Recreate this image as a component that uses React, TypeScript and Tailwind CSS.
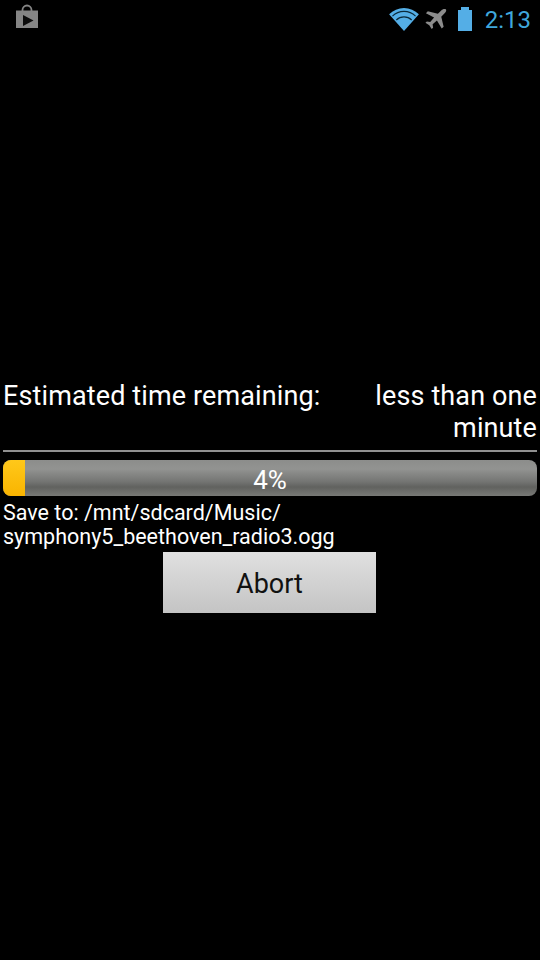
export default function App() {
  return (
    <div className="h-[960px] w-[540px] overflow-hidden bg-black font-['Roboto',sans-serif] text-white">
      <div className="flex h-[38px] items-center justify-between pl-[14px] pr-[9px]">
        <svg className="mt-[-4px]" width="26" height="26" viewBox="0 0 26 26">
          <path d="M8.5 7 V6 A4.5 4.5 0 0 1 17.5 6 V7" fill="none" stroke="#858585" strokeWidth="1.8" />
          <path d="M2 6.5 H24 V24 H2 Z" fill="#858585" />
          <path d="M9 11 L19.5 16.5 L9 22 Z" fill="#0c0c0c" />
        </svg>
        <div className="flex items-center">
          <svg width="32" height="25" viewBox="0 0 32 26">
            <path d="M0.5 7.5 A22 22 0 0 1 31.5 7.5 L16 25 Z" fill="#54aee6" />
            <path d="M4 9.5 A17 17 0 0 1 28 9.5" fill="none" stroke="#0b2a3a" strokeWidth="1.2" />
            <path d="M8 13.5 A11.5 11.5 0 0 1 24 13.5" fill="none" stroke="#0b2a3a" strokeWidth="1.2" />
          </svg>
          <svg className="ml-[4px]" width="23" height="23" viewBox="0 0 24 24">
            <path d="M23 1.5 C21.5 0.5 19.5 1 18 2.5 L14.5 6 L4 3.5 L2 5.5 L10.5 10 L6.5 14.5 L3 14 L1.5 15.5 L5.5 18 L8 22 L9.5 20.5 L9 17 L13.5 13 L18.5 21.5 L20.5 19.5 L18 9 L21.5 5.5 C23 4 23.5 2.5 23 1.5 Z" fill="#8c8c8c" />
          </svg>
          <div className="ml-[11px] flex w-[14px] flex-col items-center">
            <div className="h-[3px] w-[8px] bg-[#54aee6]" />
            <div className="h-[21px] w-[14px] bg-[#54aee6]" />
          </div>
          <span className="ml-[13px] mt-[2px] text-[24px] leading-[30px] text-[#3fa7dc]">2:13</span>
        </div>
      </div>
      <div className="px-[3px] pt-[342px]">
        <div className="flex text-[27px] leading-[32px] tracking-[0.12px]">
          <div className="shrink-0">Estimated time remaining:</div>
          <div className="flex-1 text-right">less than one minute</div>
        </div>
        <div className="mt-[6px] h-[2px] bg-[#8f8f8f]" />
        <div className="relative mt-[8px] h-[36px] overflow-hidden rounded-[8px] bg-[linear-gradient(to_bottom,#8c8d8b_0%,#929391_25%,#747573_60%,#61625f_75%,#787976_100%)]">
          <div className="absolute inset-y-0 left-0 w-[22px] bg-[linear-gradient(to_bottom,#ffc81a,#f9b400)]" />
          <div className="absolute inset-0 flex items-center justify-center pt-[3px] text-[26px] leading-[36px]">4%</div>
        </div>
        <div className="mt-[5px] text-[21.5px] leading-[24px]">
          Save to: /mnt/sdcard/Music/
          <br />
          symphony5_beethoven_radio3.ogg
        </div>
        <div className="flex justify-center">
          <button className="mt-[3px] ml-[-1px] h-[61px] w-[213px] bg-[linear-gradient(to_bottom,#e0e0e0,#c4c4c4)] pt-[3px] text-[27px] text-[#111]">
            Abort
          </button>
        </div>
      </div>
    </div>
  );
}
